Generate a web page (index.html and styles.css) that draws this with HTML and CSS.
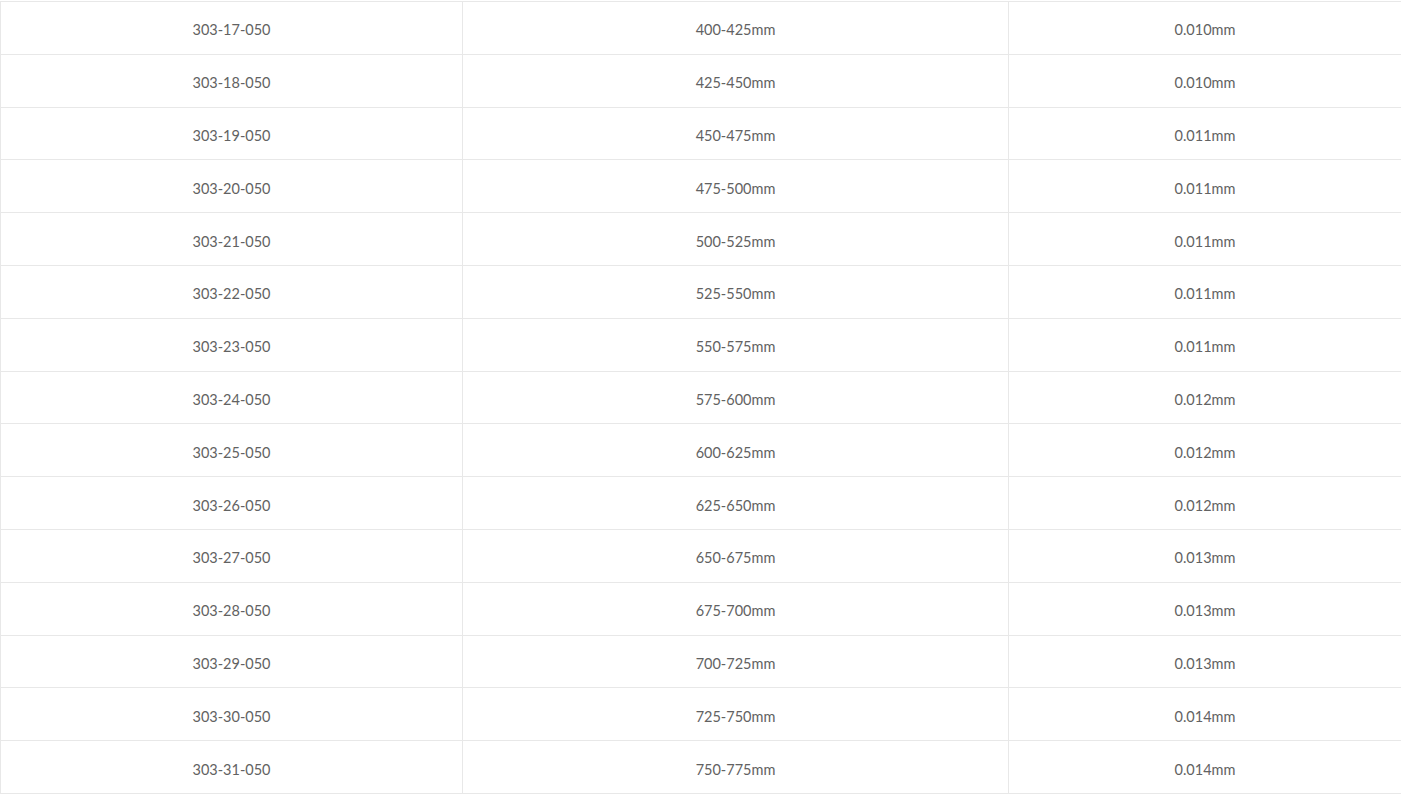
FILE: index.html
```html
<!DOCTYPE html>
<html>
<head>
<meta charset="utf-8">
<link rel="stylesheet" href="styles.css">
</head>
<body>
<div class="wrap">
<table class="spec">
<colgroup><col class="c1"><col class="c2"><col class="c3"></colgroup>
<tbody>
<tr><td>303-17-050</td><td>400-425mm</td><td>0.010mm</td></tr>
<tr><td>303-18-050</td><td>425-450mm</td><td>0.010mm</td></tr>
<tr><td>303-19-050</td><td>450-475mm</td><td>0.011mm</td></tr>
<tr><td>303-20-050</td><td>475-500mm</td><td>0.011mm</td></tr>
<tr><td>303-21-050</td><td>500-525mm</td><td>0.011mm</td></tr>
<tr><td>303-22-050</td><td>525-550mm</td><td>0.011mm</td></tr>
<tr><td>303-23-050</td><td>550-575mm</td><td>0.011mm</td></tr>
<tr><td>303-24-050</td><td>575-600mm</td><td>0.012mm</td></tr>
<tr><td>303-25-050</td><td>600-625mm</td><td>0.012mm</td></tr>
<tr><td>303-26-050</td><td>625-650mm</td><td>0.012mm</td></tr>
<tr><td>303-27-050</td><td>650-675mm</td><td>0.013mm</td></tr>
<tr><td>303-28-050</td><td>675-700mm</td><td>0.013mm</td></tr>
<tr><td>303-29-050</td><td>700-725mm</td><td>0.013mm</td></tr>
<tr><td>303-30-050</td><td>725-750mm</td><td>0.014mm</td></tr>
<tr><td>303-31-050</td><td>750-775mm</td><td>0.014mm</td></tr>
</tbody>
</table>
</div>
</body>
</html>
```
FILE: styles.css
```css
html, body {
  margin: 0;
  padding: 0;
  background: #fff;
}
.wrap {
  padding-top: 1px;
}
.spec {
  border-collapse: collapse;
  width: 1401px;
  table-layout: fixed;
  font-family: Lato, "Noto Sans", sans-serif;
  font-size: 14.5px;
  color: #626262;
}
.c1 { width: 462px; }
.c2 { width: 546px; }
.c3 { width: 393px; }
.spec td {
  border: 1px solid #e8e8e8;
  height: 51.8px;
  padding: 4px 0 0 0;
  box-sizing: border-box;
  text-align: center;
  vertical-align: middle;
}
.spec tr { height: 52.8px; }
```
